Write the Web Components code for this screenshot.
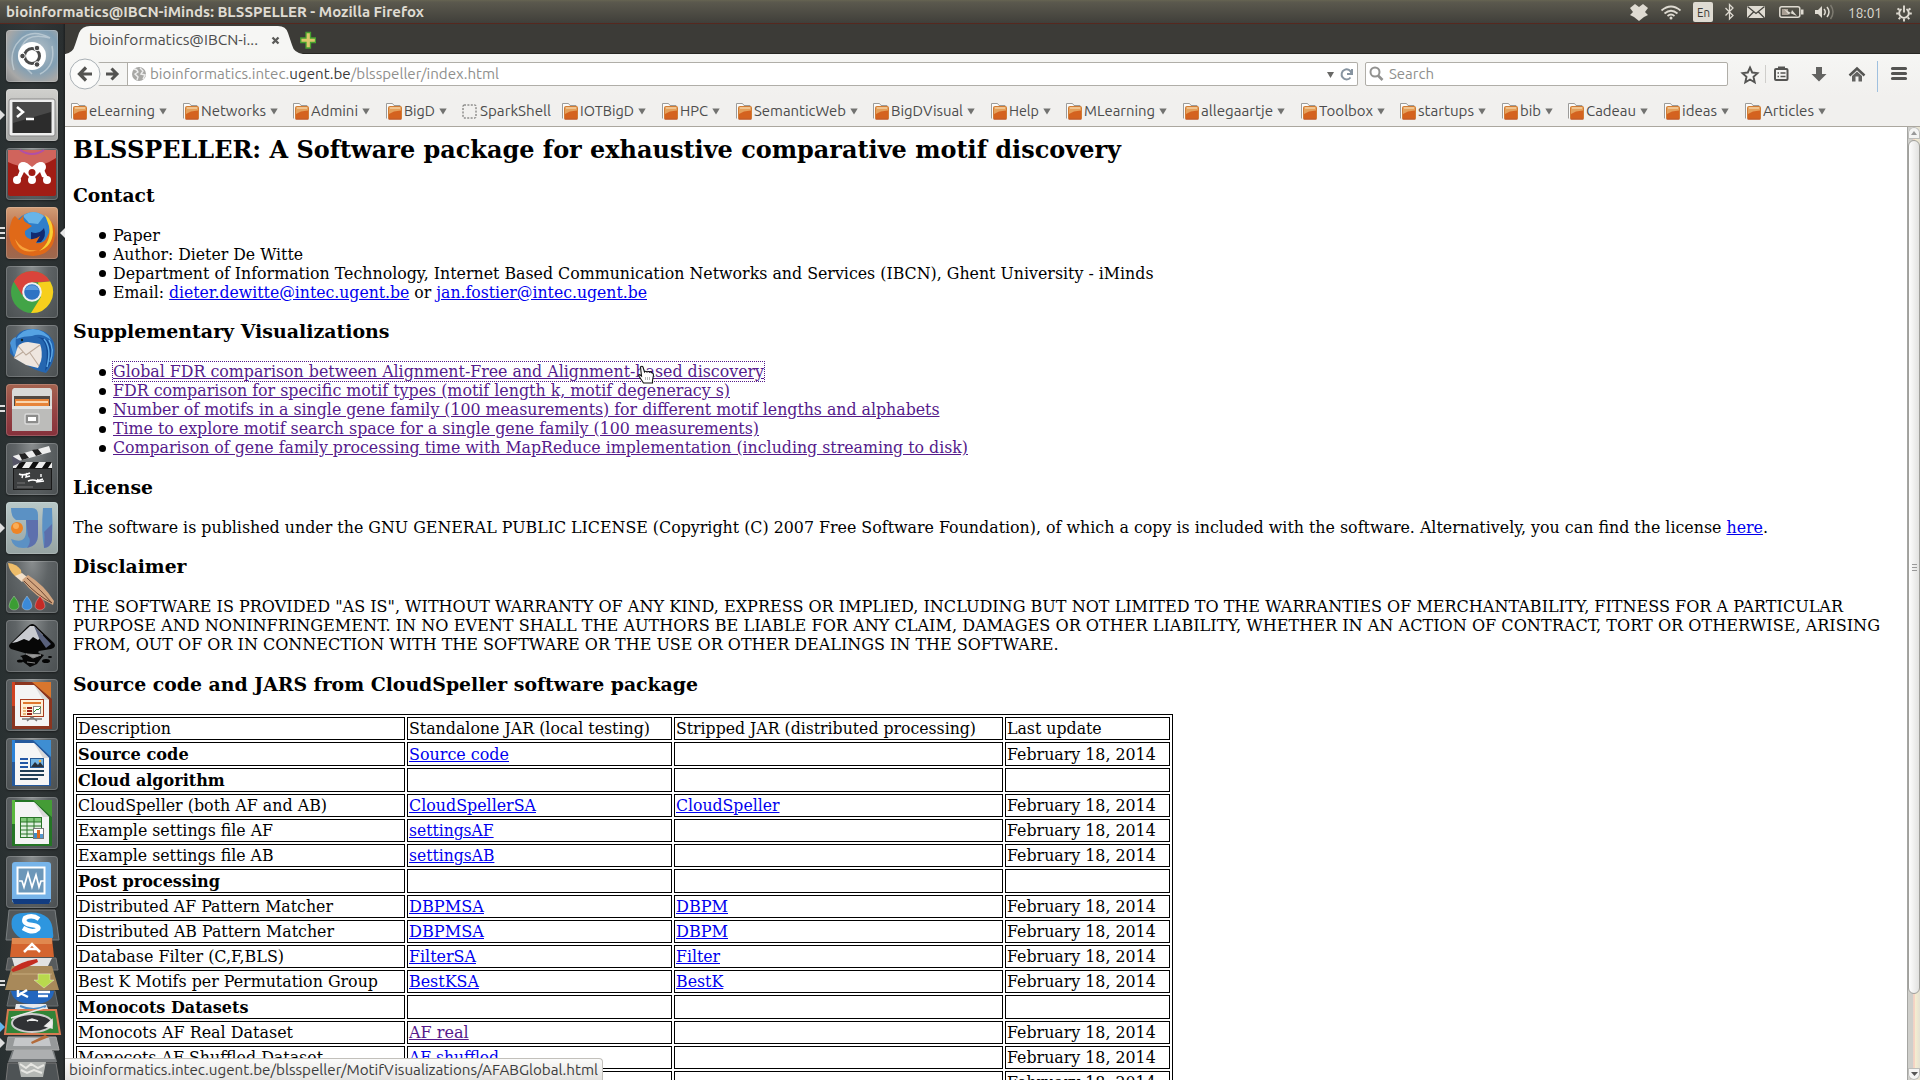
<!DOCTYPE html>
<html lang="en">
<head>
<meta charset="utf-8">
<title>bioinformatics@IBCN-iMinds: BLSSPELLER</title>
<style>
html,body{margin:0;padding:0;width:1920px;height:1080px;overflow:hidden;background:#fff}
</style>
</head>
<body>
<desktop-shell></desktop-shell>
<script>
const define = (name, html, after) => {
  const t = document.createElement('template');
  t.innerHTML = html;
  customElements.define(name, class extends HTMLElement {
    connectedCallback() {
      if (this.shadowRoot) return;
      this.attachShadow({mode: 'open'}).appendChild(t.content.cloneNode(true));
      if (after) after.call(this, this.shadowRoot);
    }
  });
};

/* Text squeezed or widened to a fixed advance */
define('fit-text', `<style>:host{display:block;white-space:pre;flex:none}span{display:inline-block;transform-origin:0 50%}</style><span><slot></slot></span>`, function (r) {
  const w = +this.getAttribute('w'), s = r.querySelector('span');
  this.style.width = w + 'px';
  const n = s.getBoundingClientRect().width;
  if (n) s.style.transform = `scaleX(${w / n})`;
});

define('system-bar', `<style>
:host{display:flex;align-items:center;height:23px;border-bottom:1px solid #56281f;background:linear-gradient(#666452 0,#5b594e 2px,#403f3a 100%);color:#dfdbd2;font:15px/22px "Ubuntu","Noto Sans",sans-serif;padding:0 7px 0 6px}
.t{font-weight:700;flex:1}
.tray{display:flex;align-items:center}
svg{display:block;flex:none}
</style>
<div class="t"><fit-text w="418">bioinformatics@IBCN-iMinds: BLSSPELLER - Mozilla Firefox</fit-text></div>
<div class="tray">
<svg width="272" height="23" viewBox="0 0 272 23">
<g transform="translate(-1623,0)" fill="#dfdbd2" stroke="none">
<path d="M1635 4l4 3 4-3 5 4-3 4 3 3-4 2-5 4-5-4-4-2 3-3-3-4z"/>
<g fill="none" stroke="#dfdbd2" stroke-width="1.7"><path d="M1661.500 10.500q9.500-8 19 0M1664.500 13.500q6.500-5.500 13 0M1667.500 16q3.500-3 7 0"/></g><circle cx="1671" cy="18" r="1.500"/>
<rect x="1693" y="2" width="20" height="20" rx="2"/>
<path d="M1725.500 8l7.500 7.500-3.500 3.500V4.500l3.500 3.500-7.500 7.500" fill="none" stroke="#dfdbd2" stroke-width="1.300"/>
<rect x="1747" y="6" width="18" height="12"/><path d="M1747.500 6.500l8.500 7 8.500-7M1747.500 18l6-6M1764.500 18l-6-6" stroke="#45443e" stroke-width="1.300" fill="none"/>
<rect x="1779.800" y="6.800" width="20" height="10.500" rx="2" fill="none" stroke="#dfdbd2" stroke-width="1.500"/><rect x="1801" y="9.500" width="2.500" height="5"/><rect x="1782" y="9" width="6" height="6" fill="#a99f94"/><path d="M1784 9l7 4 1-3 5 6-7-3-1 2z"/>
<path d="M1815 10h3l4-4v12l-4-4h-3z"/><g fill="none" stroke="#dfdbd2" stroke-width="1.500"><path d="M1824 9q2.500 3 0 6M1827 7q4 5 0 10"/><path d="M1830.500 5q5 7 0 14" stroke="#7d7a70"/></g>
</g>
<text x="80.500" y="16.500" text-anchor="middle" font-size="13" textLength="13" lengthAdjust="spacingAndGlyphs" fill="#3c3b37">En</text>
<text x="225" y="17.500" font-size="15" textLength="34" lengthAdjust="spacingAndGlyphs" fill="#dfdbd2">18:01</text>
</svg>
<svg width="18" height="22" viewBox="0 0 18 22"><g transform="translate(9,12)" fill="none" stroke="#dfdbd2"><path d="M-2.500-4a4.800 4.800 0 1 0 5 0" stroke-width="1.900"/><path d="M0-7.500v7M-7.800 .5h2.600M5.200 .5h2.600M-5.300 6.200l1.600-1.800M5.300 6.200l-1.600-1.800M0 5.500v3M-6.500-4.500l2 1.400M6.500-4.500l-2 1.400" stroke-width="1.900"/></g></svg>
</div>`);

define('launcher-tile', `<style>
:host{display:flex;flex:none;position:relative;width:52px;height:52px;margin-left:6px;border-radius:4px;background:radial-gradient(ellipse at 50% 0,#8a8e8f 0,#5f6466 45%,#4a4f51 100%);box-shadow:inset 0 0 0 1px #ffffff2e,0 1px 2px #0006}
:host([tone=light]){background:linear-gradient(#d0d0cd,#a5a6a4)}
:host([tone=dash]){background:radial-gradient(circle at 60% 40%,#b5c0c7 0,#829fb3 48%,#a8a8a7 75%,#848688 100%)}
:host([tone=fox]){background:linear-gradient(#d39d76,#ad6040 60%,#9c694f)}
:host([tone=red]){background:linear-gradient(#a56450,#964444 50%,#86313b)}
:host([tone=pale]){background:linear-gradient(#b8c8c8,#96a3a2)}
::slotted(svg){display:block;width:52px;height:52px}
i{display:none;position:absolute;left:-6px;top:21px;width:0;height:0;border:5px solid transparent;border-left:5px solid #dedede;border-right:0}
:host([run="1"]) i.a{display:block}
i.s{border:0;width:5px;height:2px;background:#dedede;box-shadow:0 5px #dedede;top:21px}
:host([run="2"]) i.s{display:block}
:host([run="3"]) i.s{display:block;top:20px;box-shadow:0 5px #dedede,0 10px #dedede}
b{display:none;position:absolute;right:-7px;top:21px;border:5px solid transparent;border-right:5px solid #e8e8e8;border-left:0}
:host([active]) b{display:block}
</style><i class="a"></i><i class="s"></i><slot></slot><b></b>`);

define('app-launcher', `<style>
:host{display:flex;flex-direction:column;gap:7px;width:65px;height:1056px;box-sizing:border-box;padding-top:6px;background:linear-gradient(90deg,#293031,#313637 50%,#2a2f30 96%,#1d2021);flex:none;overflow:hidden}
.stack{display:block;flex:none;width:65px;height:172px;margin-top:-7px}
</style>
<launcher-tile tone="dash"><svg viewBox="0 0 52 52"><path d="M8 40Q2 22 14 10T44 8q-22-6-28 8T26 44M46 16q4 20-12 28" fill="none" stroke="#c7d4dc" stroke-width="1.500" opacity=".7"/><circle cx="26" cy="26" r="14" fill="#fff"/><circle cx="26" cy="26" r="7.500" fill="none" stroke="#4a4a4a" stroke-width="3"/><g fill="#4a4a4a" stroke="#fff" stroke-width="1"><circle cx="16.500" cy="26" r="2.800"/><circle cx="31" cy="18" r="2.800"/><circle cx="31" cy="34.500" r="2.800"/></g></svg></launcher-tile>
<launcher-tile tone="light" run="1"><svg viewBox="0 0 52 52"><rect x="3" y="10" width="46" height="37" rx="2" fill="#eee" stroke="#888"/><rect x="6.500" y="13" width="39" height="31" fill="#2c2c2c"/><path d="M7 13h38v10L7 34z" fill="#484848"/><path d="M11 18l6 5-6 5" stroke="#fff" stroke-width="2.500" fill="none"/><path d="M20 30h8" stroke="#fff" stroke-width="2.500"/></svg></launcher-tile>
<launcher-tile><svg viewBox="0 0 52 52"><rect x="2" y="2" width="48" height="46" rx="2" fill="#a11d15"/><path d="M2 2h48v8q-24 16-48 4z" fill="#d0645c"/><path d="M14 2q12 8 24 0" stroke="#b04fa8" stroke-width="2" fill="none"/><g fill="#fff"><path d="M10 31q3-6 5-12a4 4 0 0 1 6-4l5 4 5-4a4 4 0 0 1 6 4q2 6 6 12l-7-2-2-5-8 8-8-8-3 6z"/><circle cx="17" cy="19" r="5"/><circle cx="35" cy="19" r="5"/><circle cx="11" cy="32" r="4"/><circle cx="26" cy="32" r="4"/><circle cx="41" cy="32" r="4"/></g><circle cx="26" cy="24.500" r="3.500" fill="#a11d15"/></svg></launcher-tile>
<launcher-tile tone="fox" run="3" active><svg viewBox="0 0 52 52"><circle cx="27" cy="25" r="19.500" fill="#2f7fca"/><path d="M17 9q10-8 21 0l-6 8-9-1z" fill="#68b4e8"/><path d="M25 25q8 3 13-4 3 8-3 14l-10 1z" fill="#122a70"/><path d="M5 16q1-5 4-7l4 4 5-5q-2 6 3 8l5 3-7 5q-1 6 5 8 5 1 10-3l-4 7q8 1 11-6 5-8 1-18 8 5 7 16-2 20-22 21Q8 48 4 33q-2-9 1-17z" fill="#e06918"/><path d="M39 8q8 5 8 17-1 15-14 19 13-9 10-25z" fill="#f8cf33"/><path d="M9 32q8 13 23 11-18 6-23-11z" fill="#f7a23a"/></svg></launcher-tile>
<launcher-tile><svg viewBox="0 0 52 52"><circle cx="26" cy="26" r="21" fill="#42a447"/><path d="M7.800 15.500A21 21 0 0 1 44.200 15.500L26 16.500 16 29z" fill="#d9443b"/><path d="M44.200 15.500A21 21 0 0 1 25 47l10-16-3-14.500z" fill="#f7cf1d"/><circle cx="26" cy="26" r="9.800" fill="#f1f1f1"/><circle cx="26" cy="26" r="7.800" fill="#2e74c4"/><path d="M19 24a7.500 7.500 0 0 1 14 0z" fill="#5a9ade"/></svg></launcher-tile>
<launcher-tile><svg viewBox="0 0 52 52"><path d="M4 28q-1-9 5-14 3-9 15-10 18-1 24 14 3 17-8 30-8-2-12-4L10 34z" fill="#2566b0"/><path d="M10 14q6-10 17-10 13 1 18 11-10-8-19-4-8 0-16 3z" fill="#56a3e3"/><path d="M4 18q2-5 6-6-1 8 1 13l-3 6z" fill="#4a94d8"/><path d="M8 33l4-12q4-4 10-4l12 2q3 8 1 17l-3 7-12-3z" fill="#eee6df"/><path d="M12 21l8 9 14-10M8 33l9-6M33 41l-9-13" fill="none" stroke="#bba99a" stroke-width="1.100"/><path d="M31 12q14 3 8 34 9-9 8-22-2-11-16-12z" fill="#124a94"/><path d="M38 14q8 9 3 28M43 15q6 9 1 22" fill="none" stroke="#5fabe8" stroke-width="1.500"/><circle cx="16" cy="15" r="1.200" fill="#122"/></svg></launcher-tile>
<launcher-tile tone="red" run="2"><svg viewBox="0 0 52 52"><path d="M6 7q0-2 2-3h36q2 1 2 3v15H6z" fill="#d9d9d7"/><path d="M8 12h36v10H8z" fill="#534942"/><path d="M9 15h34v8H9z" fill="#e78439"/><path d="M10 18h32" stroke="#fff1d6" stroke-width="1.500"/><path d="M6 22h40v25H6z" fill="#bcbcba"/><path d="M6 22h40v3H6z" fill="#e4e4e2"/><rect x="19" y="30" width="14" height="10" rx="1.500" fill="#8c8c8b" stroke="#dadada" stroke-width="1.500"/><rect x="22" y="33" width="8" height="4" fill="#fff"/></svg></launcher-tile>
<launcher-tile><svg viewBox="0 0 52 52"><path d="M7 13L43 3l2 6L9 19z" fill="#eee"/><path d="M13 11l6-1 4 5-7 2zm13-4l6-1 4 5-6 2z" fill="#222"/><rect x="7" y="19" width="39" height="6" fill="#eee"/><path d="M14 19h6l-4 6h-6zm13 0h6l-4 6h-6zm13 0h6l-4 6h-6z" fill="#111"/><path d="M6 13l10 6-9 4z" fill="#556"/><rect x="7.500" y="25.500" width="38" height="21" fill="#3d3f40" stroke="#191919"/><path d="M13 31q4 2 11-1M17 31l-1 4M21 30l-1 4 4-1M22 38q5-2 9 0l6-2M32 36l-1 3 7-1M35 31v3" fill="none" stroke="#fff" stroke-width="1.400"/><path d="M11 40h8M11 44h16" stroke="#777"/></svg></launcher-tile>
<launcher-tile tone="pale" run="1"><svg viewBox="0 0 52 52"><path d="M5 6h21q6 0 6 7v19q0 14-15 14-10 0-12-9 16 6 15-10V18H10q-5-3-5-12z" fill="#5b91c4"/><path d="M20 18h12v15q0 11-11 13 5-7 1-12z" fill="#5d66a5" opacity=".75"/><path d="M37 6h9q1 17 0 32-1 7-8 8-3-17-1-40z" fill="#5b91c4"/><path d="M46 22v16q-1 7-8 8 1-14 0-16z" fill="#5d66a5" opacity=".8"/><circle cx="11" cy="26" r="6" fill="#ee8425"/><circle cx="10" cy="24" r="3" fill="#faad57"/></svg></launcher-tile>
<launcher-tile><svg viewBox="0 0 52 52"><path d="M2 2q9 1 13 7l1 7-7-1q-6-5-7-13z" fill="#eebd6a"/><path d="M9 15l7-3 5 4-5 5z" fill="#f3e0c9"/><path d="M16 19l6-5q16 10 26 26l-1 4q-18-8-31-25z" fill="#d3a680"/><path d="M21 17q15 13 25 25M18 20q14 15 28 22" stroke="#704834" fill="none"/><g stroke="#fff6" stroke-width=".7"><path d="M8 35q5 6 5 10a5 4 0 0 1-10 0q0-4 5-10z" fill="#3b9d34"/><path d="M21 35q5 6 5 10a5 4 0 0 1-10 0q0-4 5-10z" fill="#3b8ad8"/><path d="M34 35q5 6 5 10a5 4 0 0 1-10 0q0-4 5-10z" fill="#c52b26"/></g></svg></launcher-tile>
<launcher-tile><svg viewBox="0 0 52 52"><path d="M26 4q3 0 6 4l16 15q3 4-3 6l-12 2q-3 2 5 4-5 6-7 9l-7 3-8-6q2-3-2-5l8-2-17-5q-4-3 0-6L21 7q3-3 5-3z" fill="#070707"/><path d="M24 6h4l9 9-5 5-5-3-4 4-5-2-7 3-5 1z" fill="#c9cbd0"/><path d="M28 6l17 18-5 4-7-10z" fill="#59617c"/><path d="M20 34l15 1-8 3zM21 42l8 1" fill="#999" stroke="#888"/><g fill="#050505"><ellipse cx="14" cy="41" rx="3" ry="1.500"/><ellipse cx="40" cy="41" rx="4" ry="2"/><ellipse cx="44" cy="37" rx="2" ry="1"/></g></svg></launcher-tile>
<launcher-tile><svg viewBox="0 0 52 52"><path d="M6 3h22l18 17v30H6z" fill="#8b351f"/><path d="M6 3h3v24H6z" fill="#d14220"/><path d="M26 3h19v16z" fill="#d9762d"/><path d="M9 6h19l15 15v26H9z" fill="#f4f4f4"/><path d="M28 6l15 15h-6z" fill="#d9d9d9"/><rect x="14.500" y="20.500" width="23" height="17" fill="#fff0d7" stroke="#a63a1d"/><path d="M17 24h18" stroke="#e0782d" stroke-width="2"/><path d="M17 29h3M17 32h3M17 35h3" stroke="#e4a055" stroke-width="1.600"/><path d="M21 29h5M21 32h5M21 35h5" stroke="#962016" stroke-width="1.800"/><rect x="27.500" y="27.500" width="7" height="7" fill="#fff" stroke="#888"/><path d="M28 33l3-3 1 1 3-3" stroke="#2b9234" fill="none"/><path d="M16 40h20M21 42l5-4 5 4" stroke="#777" fill="none" stroke-width="1.500"/></svg></launcher-tile>
<launcher-tile><svg viewBox="0 0 52 52"><path d="M6 2h22l17 17v29H6z" fill="#25599c"/><path d="M6 2h3v22H6z" fill="#2c83d8"/><path d="M27 2h18v17z" fill="#3e8ed2"/><path d="M9 5h19l15 15v27H9z" fill="#f6f6f6"/><path d="M28 5l15 15h-6z" fill="#d9d9d9"/><path d="M14 21h8M14 25h8M14 29h8" stroke="#2457a5" stroke-width="2"/><path d="M14 33h24M14 37h24M14 41h18" stroke="#203e56" stroke-width="2"/><rect x="24.500" y="20.500" width="13" height="9" fill="#73b4e4" stroke="#275a94"/><path d="M25 29l4-5 3 3 2-3 4 5z" fill="#29313c"/><circle cx="34" cy="23" r="1.300" fill="#f6b33c"/></svg></launcher-tile>
<launcher-tile><svg viewBox="0 0 52 52"><path d="M6 3h22l18 17v29H6z" fill="#247525"/><path d="M6 3h3v24H6z" fill="#5ab83e"/><path d="M27 3h19v17z" fill="#449c36"/><path d="M9 5h19l15 15v27H9z" fill="#f4f4f4"/><path d="M28 5l15 15h-6z" fill="#d9d9d9"/><rect x="14.500" y="20.500" width="21" height="20" fill="#dff0df" stroke="#287427"/><rect x="15" y="21" width="20" height="4" fill="#82c87b"/><path d="M14 25h22M14 29h22M14 33h22M14 37h22M21 20v21M28 20v21" stroke="#287427"/><rect x="27.500" y="31.500" width="10" height="10" fill="#fff" stroke="#777"/><rect x="28" y="36" width="3" height="5" fill="#3f8dc6"/><rect x="31" y="33" width="3" height="8" fill="#da6b24"/><rect x="34" y="37" width="3" height="4" fill="#5598cf"/></svg></launcher-tile>
<launcher-tile><svg viewBox="0 0 52 52"><rect x="6" y="6" width="39" height="41" rx="3" fill="#77b4e9"/><path d="M6 43h39l-2 5H8z" fill="#123c80"/><rect x="11.500" y="11.500" width="27" height="26" fill="#6c97b9" stroke="#fff" stroke-width="2"/><path d="M13 25h3l2 6 4-14 4 14 4-12 3 12 2-6h3" stroke="#fff" stroke-width="1.700" fill="none"/></svg></launcher-tile>
<svg class="stack" viewBox="0 0 65 172">
<g transform="translate(0,-28)" stroke-width="1">
<path d="M9 30h46l4 30H6z" fill="#53585a" stroke="#7a7f80"/>
<path d="M12 48q-3-15 11-15 30-4 30 20 2 9-8 6-26 6-33-11z" fill="#2e96df"/><path d="M39 39q-7-5-14-1-3 6 7 7 8 1 6 4-5 5-15-1" fill="none" stroke="#fff" stroke-width="4.500"/>
<path d="M12 58h40l2 19H10z" fill="#d4642f"/><path d="M12 58h40v6H12z" fill="#e0884f"/><path d="M24 72l8-8 8 8M27 69h10" stroke="#fff" stroke-width="2.500" fill="none"/>
<path d="M8 78h48l2 12H6z" fill="#575b5d" stroke="#777"/><path d="M12 78h40l-4 8 4 6H16z" fill="#e2e2e2"/>
<path d="M12 86h40l7 24H5z" fill="#a8895a"/><path d="M12 94h40" stroke="#c7ab7c"/><path d="M38 94h12v6h4l-10 8-10-8h4z" fill="#b9d94d" stroke="#fff5"/>
<path d="M11 90q7-8 26-11l1 3q-14 7-25 10z" fill="#c42c20"/>
<path d="M10 111h45l3 15H7z" fill="#505557" stroke="#6b7072"/><path d="M11 111h43q-1 13-21 13-20 0-22-13z" fill="#2366be"/><path d="M18 110v7M19 115l8-5M20 113l8 4M38 112h12M38 116h10" stroke="#fff" stroke-width="2.500"/>
<path d="M16 124h30l4 9H14z" fill="#e7e9ec"/><path d="M20 126q14 6 26 0" stroke="#468ac9" fill="none" stroke-width="2"/>
<path d="M8 130h48l4 24H5z" fill="#318438" stroke="#d67b52" stroke-width="2"/><ellipse cx="32" cy="143" rx="20" ry="9" fill="#303235" stroke="#ccc" stroke-width="2"/><path d="M11 138l33-10M27 141l5-2 6 2M45 146l7-6v8z" stroke="#e9e9e9" fill="#eee" stroke-width="1.500"/>
<path d="M8 157h48l3 13H6z" fill="#96999a" stroke="#aaa"/><path d="M15 158h34l2 8H13z" fill="#c5c7c9"/><path d="M31 162l14-7 4 2-17 7z" fill="#b36b3b"/>
<path d="M12 171h42l3 11H8z" fill="#777b7d"/><path d="M14 170h38l3 9H11z" fill="#adafb0"/>
<path d="M8 183h48l3 18H6z" fill="#4e5355" stroke="#777"/><path d="M18 182h28l-3 15H21z" fill="#b5b8b5"/><path d="M20 184l6 4 5-4 7 4 6-3M21 190l6 3 7-3 8 3" stroke="#e7e7e3" fill="none" stroke-width="2"/>
<path d="M0 101h5M0 105h5" stroke="#ddd" stroke-width="2"/><path d="M0 142l5 5-5 5z" fill="#63b6f0"/><path d="M0 158l5 5-5 5z" fill="#ddd"/>
</g></svg>`);

define('tab-strip', `<style>
:host{display:flex;height:30px;background:#3c3b37;font:15px/28px "Ubuntu","Noto Sans",sans-serif;color:#4c4c4c;box-shadow:inset 0 -1px #272623}
svg{display:block}
.tab{position:relative;width:238px;height:30px;display:flex;padding:2px 0 0 24px;box-sizing:border-box}
.bg{position:absolute;left:0;top:0}
fit-text{position:relative}
.x{position:relative;flex:none;margin:10px 0 0 13px;width:9px;height:9px}
.plus{margin:7px 0 0 -3px}
</style>
<div class="tab"><svg class="bg" width="240" height="30" viewBox="0 0 240 30"><path d="M0 30q8-1 10-9l4-12q3-7 11-7h188q8 0 10 7l4 12q2 8 11 9z" fill="#f6f6f4"/></svg><fit-text w="169">bioinformatics@IBCN-i...</fit-text><svg class="x" viewBox="0 0 9 9"><path d="M1.500 1.500l6 6M7.500 1.500l-6 6" stroke="#5b5b59" stroke-width="2.300"/></svg></div>
<svg class="plus" width="16" height="18" viewBox="0 0 16 18"><path d="M6 1.500h4.500v5.500H15.500v4.500H10.500V17H6v-5.500H.8V7H6z" fill="#dcc76a" stroke="#46a12f" stroke-width="1.300"/></svg>`);

define('nav-bar', `<style>
:host{display:flex;height:42px;box-sizing:border-box;padding:7px 0 0 4px;background:linear-gradient(#f6f6f4,#f1f0ee);font:15px/22px "Ubuntu","Noto Sans",sans-serif;color:#8f8f8d}
svg{display:block;flex:none}
.back{margin-top:-6px;position:relative;z-index:1}
.url,.search{height:22px;border:1px solid #b0aea8;background:#fff;display:flex;align-items:center;border-radius:2px;margin-top:1px}
.url{width:1259px;border-left:0;margin-left:-3px}
.fwd{width:29px;height:100%;border-right:1px solid #b0aea8;background:#f5f5f3;display:flex;align-items:center}
.url b{font-weight:400;color:#3a3a38}
.gap{flex:1}
.search{width:361px;margin-left:7px}
.tools{margin-left:1px}
</style>
<svg class="back" width="32" height="38" viewBox="0 0 32 38"><ellipse cx="16" cy="19" rx="15" ry="15" fill="#fbfbfa" stroke="#a9b0b5"/><path d="M11 19H23M17 12.500l-6.500 6.500 6.500 6.500" stroke="#535351" stroke-width="3.200" fill="none"/></svg>
<div class="url"><div class="fwd"><svg width="28" height="22" viewBox="0 0 28 22"><path d="M8 11h10M13.500 5.500L19 11l-5.500 5.500" stroke="#535351" stroke-width="3" fill="none"/></svg></div>
<svg width="16" height="16" viewBox="0 0 16 16" style="margin:0 3px 0 3px"><circle cx="8" cy="8" r="7" fill="#a8a8a6"/><path d="M3 3q3 0 4 3l-3 2 3 3-1 3M9 2l3 3-2 3 4 1-2 4" stroke="#eee" fill="none" stroke-width="1.400"/></svg>
<fit-text w="349">bioinformatics.intec.<b>ugent.be</b>/blsspeller/index.html</fit-text><span class="gap"></span>
<svg width="30" height="20" viewBox="0 0 30 20" style="margin-right:1px"><path d="M1 8h7l-3.500 6z" fill="#686866"/><path d="M26 5v5h-5M25.500 9.500a5 5 0 1 0-1 4" stroke="#8794a0" stroke-width="2" fill="none"/></svg></div>
<div class="search"><svg width="22" height="22" viewBox="0 0 22 22"><circle cx="9" cy="9" r="4.500" fill="none" stroke="#929290" stroke-width="2"/><path d="M12 12.500l4.500 4.500" stroke="#929290" stroke-width="2.600"/></svg><fit-text w="45" style="margin-left:1px">Search</fit-text></div>
<svg class="tools" width="190" height="35" viewBox="1729 61 190 35" fill="none" stroke="#545452">
<path d="M1750 67.500l2.200 5 5.300.6-4 3.700 1.200 5.500-4.700-2.800-4.700 2.800 1.200-5.500-4-3.700 5.300-.6z" stroke-width="1.900"/>
<path d="M1765.500 65v18" stroke="#cfcecb"/>
<rect x="1775" y="69" width="12.500" height="11" rx="1" stroke-width="2"/><path d="M1778 68h7" stroke-width="3"/><path d="M1777.500 73h1.500M1780.500 73h5M1777.500 76.500h1.500M1780.500 76.500h5" stroke-width="1.500"/>
<path d="M1816 67h6v7h4.500l-7.500 7.500-7.500-7.500h4.500z" fill="#636361" stroke="none"/>
<path d="M1849.500 75.500l7.500-7 7.500 7" stroke-width="2.500"/><path d="M1852 76l5-4.500 5 4.500v5.500h-3.500v-5h-3v5h-3.500z" fill="#636361" stroke="none"/>
<path d="M1877.500 61v31" stroke="#9fc0df"/>
<path d="M1892.500 68.500h13M1892.500 73.500h13M1892.500 78.500h13" stroke-width="3.200" stroke-linecap="round"/>
</svg>`);

define('bookmark-item', `<style>
:host{display:flex;align-items:center;flex:none;margin-right:15.600px}
svg{display:block;flex:none}.f{margin-right:2px}.d{margin-left:4px}
.p{display:none}:host([plain]) .f,:host([plain]) .d{display:none}:host([plain]) .p{display:block;margin:0 3px 0 5px}:host([plain]){margin-right:11px;margin-left:-5px}
</style><svg class="f" width="16" height="18" viewBox="0 0 16 18"><path d="M.5 16.500V1.500h6l1.500 2h6v3" fill="#fbfbfa" stroke="#9c9c9a"/><rect x="2.500" y="4.500" width="13" height="12.500" rx="1" fill="#e4a15c" stroke="#d17c35"/><path d="M3 12l5-2.500 7-1V16.500H3z" fill="#d4621f"/><path d="M4 6h10" stroke="#f4cf9f" stroke-width="1.500"/><path d="M2.500 17h13" stroke="#b94518"/></svg><svg class="p" width="15" height="18" viewBox="0 0 15 18"><rect x="1" y="3" width="13" height="13" rx="1" fill="none" stroke="#5e5e5c" stroke-dasharray="2 1.400"/></svg><slot></slot><svg class="d" width="8" height="8" viewBox="0 0 8 8"><path d="M.3 1.500h7.400L4 7.500z" fill="#727270"/></svg>`);

define('bookmarks-bar', `<style>
:host{display:flex;align-items:center;height:30px;background:#f1f0ee;border-bottom:1px solid #aba79f;padding-left:6px;font:15px/22px "Ubuntu","Noto Sans",sans-serif;color:#4c4c4c}
</style>`, function (r) {
  for (const [n, w] of [['eLearning',66],['Networks',65],['Admini',47],['BigD',31],['SparkShell',71],['IOTBigD',54],['HPC',28],['SemanticWeb',92],['BigDVisual',72],['Help',30],['MLearning',71],['allegaartje',72],['Toolbox',54],['startups',56],['bib',21],['Cadeau',50],['ideas',35],['Articles',51]]) {
    const b = document.createElement('bookmark-item');
    if (n === 'SparkShell') b.setAttribute('plain', '');
    b.innerHTML = `<fit-text w="${w}">${n}</fit-text>`;
    r.appendChild(b);
  }
});

define('jar-table', `<style>
:host{display:block}
table{border:1px solid #000;border-spacing:2px;width:1100px;table-layout:fixed;border-collapse:separate}
td{border:1px solid #000;padding:1px;line-height:19px;height:19px;white-space:nowrap}
tr.h td{padding-top:2px}
fit-text{height:19px}
a{color:#00e;text-decoration:underline}a.v{color:#551a8b}
</style><table><colgroup><col style="width:329px"><col style="width:265px"><col style="width:329px"><col></colgroup><tbody></tbody></table>`, function (r) {
  const D = ['February 18, 2014', 148.7], N = null, rows = [
    [['Description',93],['Standalone JAR (local testing)',241],['Stripped JAR (distributed processing)',300],['Last update',94.7]],
    [['*Source code',110.7],['Source code',100],N,D],
    [['*Cloud algorithm',146.7],N,N,N],
    [['CloudSpeller (both AF and AB)',249],['CloudSpellerSA',127],['CloudSpeller',103.5],D],
    [['Example settings file AF',195],['settingsAF',84.6],N,D],
    [['Example settings file AB',195.5],['settingsAB',85.4],N,D],
    [['*Post processing',142],N,N,N],
    [['Distributed AF Pattern Matcher',255],['DBPMSA',75],['DBPM',52],D],
    [['Distributed AB Pattern Matcher',256],['DBPMSA',75],['DBPM',52],D],
    [['Database Filter (C,F,BLS)',206],['FilterSA',67],['Filter',44],D],
    [['Best K Motifs per Permutation Group',300],['BestKSA',70],['BestK',47.3],D],
    [['*Monocots Datasets',170.4],N,N,N],
    [['Monocots AF Real Dataset',215],['AF real',59.7],N,D],
    [['Monocots AF Shuffled Dataset',245],['AF shuffled',90],N,D],
    [N,N,N,D]];
  r.querySelector('tbody').innerHTML = rows.map((row, i) => {
    const head = row[0] && row[0][0][0] === '*';
    return `<tr${head ? ' class="h"' : ''}>` + row.map((c, j) => {
      if (!c) return '<td></td>';
      let t = c[0];
      if (t[0] === '*') t = `<b>${t.slice(1)}</b>`;
      else if (i && (j === 1 || j === 2)) t = `<a${t === 'AF real' ? ' class="v"' : ''}>${t}</a>`;
      return `<td><fit-text w="${c[1]}">${t}</fit-text></td>`;
    }).join('') + '</tr>';
  }).join('');
});

define('web-page', `<style>
:host{display:block;flex:1;height:953px;box-sizing:border-box;padding:9px 8px 0;overflow:hidden;background:#fff;color:#000;font:16px/19px "DejaVu Serif",serif}
h2{font-size:24px;line-height:28px;height:28px;margin:0 0 20px}h3{font-size:18.720px;line-height:23px;height:23px;margin:18.700px 0}
ul{margin:0;padding-left:40px;list-style:none}
li{height:19px;display:flex;align-items:center}
li::before{content:"";flex:none;width:7px;height:7px;border-radius:50%;background:#000;margin:1px 7.500px 0 -14.500px}
p{margin:0}p.lic{padding-top:1px;margin-bottom:-1px}
fit-text{height:100%}p fit-text{height:19px}
a{color:#00e;text-decoration:underline}.v a{color:#551a8b}
.f{outline:1px dotted #551a8b}
</style>
<h2><fit-text w="1048">BLSSPELLER: A Software package for exhaustive comparative motif discovery</fit-text></h2>
<h3><fit-text w="81.500">Contact</fit-text></h3>
<ul><li><fit-text w="47">Paper</fit-text></li><li><fit-text w="190">Author: Dieter De Witte</fit-text></li><li><fit-text w="1040.500">Department of Information Technology, Internet Based Communication Networks and Services (IBCN), Ghent University - iMinds</fit-text></li><li><fit-text w="534">Email: <a>dieter.dewitte@intec.ugent.be</a> or <a>jan.fostier@intec.ugent.be</a></fit-text></li></ul>
<h3><fit-text w="316.500">Supplementary Visualizations</fit-text></h3>
<ul class="v"><li><fit-text class="f" w="651"><a>Global FDR comparison between Alignment-Free and Alignment-based discovery</a></fit-text></li><li><fit-text w="617"><a>FDR comparison for specific motif types (motif length k, motif degeneracy s)</a></fit-text></li><li><fit-text w="826.500"><a>Number of motifs in a single gene family (100 measurements) for different motif lengths and alphabets</a></fit-text></li><li><fit-text w="646"><a>Time to explore motif search space for a single gene family (100 measurements)</a></fit-text></li><li><fit-text w="855"><a>Comparison of gene family processing time with MapReduce implementation (including streaming to disk)</a></fit-text></li></ul>
<h3><fit-text w="80">License</fit-text></h3>
<p class="lic"><fit-text w="1695">The software is published under the GNU GENERAL PUBLIC LICENSE (Copyright (C) 2007 Free Software Foundation), of which a copy is included with the software. Alternatively, you can find the license <a>here</a>.</fit-text></p>
<h3><fit-text w="113.500">Disclaimer</fit-text></h3>
<p><fit-text w="1770">THE SOFTWARE IS PROVIDED "AS IS", WITHOUT WARRANTY OF ANY KIND, EXPRESS OR IMPLIED, INCLUDING BUT NOT LIMITED TO THE WARRANTIES OF MERCHANTABILITY, FITNESS FOR A PARTICULAR</fit-text><fit-text w="1807">PURPOSE AND NONINFRINGEMENT. IN NO EVENT SHALL THE AUTHORS BE LIABLE FOR ANY CLAIM, DAMAGES OR OTHER LIABILITY, WHETHER IN AN ACTION OF CONTRACT, TORT OR OTHERWISE, ARISING</fit-text><fit-text w="985.500">FROM, OUT OF OR IN CONNECTION WITH THE SOFTWARE OR THE USE OR OTHER DEALINGS IN THE SOFTWARE.</fit-text></p>
<h3><fit-text w="625">Source code and JARS from CloudSpeller software package</fit-text></h3>
<jar-table></jar-table>`);

define('scroll-bar', `<style>
:host{display:flex;flex-direction:column;width:13px;height:953px;box-sizing:border-box;border-left:1px solid #a5a5a2;background:linear-gradient(90deg,#cfcfcb 45%,#f6d3c4 46%,#f6d3c4 60%,#f4ecd0 62%,#e5e1d2);flex:none}
.b{height:12px;background:#f4f4f3;border-radius:6px 6px 0 0;border-bottom:0;display:flex;align-items:center;justify-content:center;box-shadow:inset 0 0 0 1px #bdbdba}
.b.d{border-radius:0 0 6px 6px}
.t{height:854px;margin-top:1px;border:1px solid #a0a09c;box-sizing:border-box;border-radius:6px;background:linear-gradient(90deg,#fdfdfd,#e2e2e0);display:flex;flex-direction:column;align-items:center;justify-content:center;gap:2px}
.t i{width:5px;height:1px;background:#999}.g{flex:1}svg{display:block}
</style><div class="b"><svg width="6" height="4"><path d="M0 4h6L3 0z" fill="#999"/></svg></div><div class="t"><i></i><i></i><i></i></div><div class="g"></div><div class="b d"><svg width="7" height="4"><path d="M0 0h7L3.500 4z" fill="#555"/></svg></div>`);

define('status-bubble', `<style>
:host{display:block;position:absolute;left:65px;top:1058px;width:538px;height:22px;box-sizing:border-box;background:linear-gradient(#fbfbfa,#e4e3e1);border:1px solid #c2c0bb;border-left:0;border-bottom:0;border-radius:0 4px 0 0;padding-left:4px;font:15px/21px "Ubuntu","Noto Sans",sans-serif;color:#3c3c3c}
</style><fit-text w="529">bioinformatics.intec.ugent.be/blsspeller/MotifVisualizations/AFABGlobal.html</fit-text>`);

define('hand-cursor', `<style>:host{display:block;position:absolute;left:637px;top:365px}svg{display:block}</style>
<svg width="19" height="20" viewBox="0 0 19 20"><path d="M3.500 2q1.500-1.500 2.500 0l1.500 5q1-1.500 2.500 0 1.500-1.200 2.500.2 1.500-.8 2.500.8 1.500 0 1.500 2l-1 5.500v2.500H6.500l-4-6q-1.500-2.500 0-2.500l2 1.500z" fill="#fff" stroke="#111" stroke-width="1.100"/><path d="M8.500 12v3M10.500 12v3M12.500 12v3" stroke="#999" stroke-width=".7"/></svg>`);

define('desktop-shell', `<style>
:host{display:flex;flex-direction:column;width:1920px;height:1080px;overflow:hidden;position:relative}
main{display:flex}section{width:1855px;flex:none}.v{display:flex}
</style><system-bar></system-bar><main><app-launcher></app-launcher><section><tab-strip></tab-strip><nav-bar></nav-bar><bookmarks-bar></bookmarks-bar><div class="v"><web-page></web-page><scroll-bar></scroll-bar></div></section></main><status-bubble></status-bubble><hand-cursor></hand-cursor>`);
</script>
</body>
</html>
